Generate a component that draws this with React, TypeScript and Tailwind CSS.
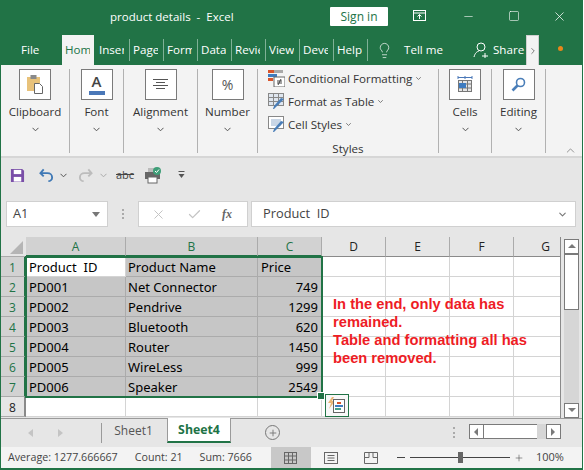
import React from "react";
import { ChevronDown, ChevronUp, ChevronRight, Lightbulb, Minus, Plus, Square, X, Check } from "lucide-react";

const ui = { fontFamily: '"Open Sans","Noto Sans",sans-serif' };

function Chev({ className = "" }: { className?: string }) {
  return (
    <svg width="7" height="5" viewBox="0 0 7 5" className={className}>
      <path d="M0.5 0.8 L3.5 3.8 L6.5 0.8" fill="none" stroke="#555" strokeWidth="1" />
    </svg>
  );
}

function Tab({ label, active }: { label: string; active?: boolean }) {
  return (
    <div className="relative w-[34px] h-[30px] shrink-0 flex items-center">
      <div className={active ? "absolute left-0 top-0 w-[32px] h-[30px] bg-[#f3f3f3]" : ""} />
      <span
        className={
          "relative block w-[25px] ml-[3px] overflow-hidden whitespace-nowrap text-[11.6px] " +
          (active ? "text-[#217346]" : "text-white")
        }
      >
        {label}
      </span>
      {!active && <div className="absolute right-0 top-[4px] h-[22px] w-px bg-[#7fb196]" />}
    </div>
  );
}

function Group({ w, label, icon }: { w: string; label: string; icon: React.ReactNode }) {
  return (
    <div className={"shrink-0 h-[84px] border-r border-[#b1b1b1] flex flex-col items-center pt-0 " + w}>
      <div className="w-[32px] h-[31px] bg-white border border-[#7a7a7a] flex items-center justify-center">{icon}</div>
      <div className="mt-[3px] text-[11.6px] leading-[18px] text-[#333]">{label}</div>
      <Chev className="mt-[6px]" />
    </div>
  );
}

function StyleRow({ label, icon, chev }: { label: string; icon: React.ReactNode; chev?: boolean }) {
  return (
    <div className="h-[23px] shrink-0 flex items-center">
      <div className="w-[17px] h-[17px] mr-[3px]">{icon}</div>
      <span className="text-[11.6px] text-[#333] whitespace-nowrap">{label}</span>
      {chev && <Chev className="ml-[3px] scale-75" />}
    </div>
  );
}

const cols = ["A", "B", "C", "D", "E", "F", "G"];
const rows: string[][] = [
  ["Product  ID", "Product Name", "Price"],
  ["PD001", "Net Connector", "749"],
  ["PD002", "Pendrive", "1299"],
  ["PD003", "Bluetooth", "620"],
  ["PD004", "Router", "1450"],
  ["PD005", "WireLess", "999"],
  ["PD006", "Speaker", "2549"],
  ["", "", ""],
];

function Cell({ text, sel, white, right, i }: { text?: string; sel?: boolean; white?: boolean; right?: boolean; i: number }) {
  const bg = sel && !white ? "bg-[#c6c6c6] border-[#ababab]" : "bg-white border-[#d4d4d4]";
  return (
    <div
      className={
        "border-r border-b h-[20px] leading-[21px] whitespace-pre text-[13px] text-black overflow-hidden " +
        (i === 1 ? "px-[2px] " : "px-[3px] ") +
        bg +
        (right ? " text-right" : "")
      }
      style={{ fontFamily: '"Noto Sans",sans-serif' }}
    >
      {text}
    </div>
  );
}

function SbBtn({ dir }: { dir: "up" | "down" | "left" | "right" }) {
  const pts = { up: "1,6 5,2 9,6", down: "1,2 5,6 9,2", left: "6,1 2,5 6,9", right: "2,1 6,5 2,9" }[dir];
  return (
    <div className="w-[15px] h-[15px] bg-white border border-[#7a7a7a] flex items-center justify-center shrink-0">
      <svg width="10" height="10" viewBox="0 0 10 10"><polygon points={pts} fill="#7a7a7a" /></svg>
    </div>
  );
}

export default function App() {
  return (
    <div className="w-[583px] h-[470px] bg-[#217346] flex flex-col overflow-hidden pl-px pr-px pb-[2px]" style={ui}>
      {/* Title bar */}
      <div className="h-[35px] shrink-0 flex items-center text-white relative">
        <div className="ml-[109px] w-[220px] text-[11.5px] whitespace-pre pb-[1px]">product details  -  Excel</div>
        <div className="w-[58px] h-[19px] bg-white rounded-[1px] text-[#217346] text-[12px] flex items-center justify-center mb-[2px]">Sign in</div>
        <svg width="14" height="12" viewBox="0 0 14 12" className="ml-[25px] mb-[3px]" fill="none" stroke="white">
          <rect x="0.5" y="0.5" width="12" height="10" />
          <path d="M0.5 3 H12.5 M6.5 9 V4.5 M4.5 6.5 L6.5 4.5 L8.5 6.5" />
        </svg>
        <Minus size={13} strokeWidth={1.1} className="ml-[35px] mb-[3px]" />
        <Square size={12} strokeWidth={1.2} className="ml-[33px] mb-[3px]" />
        <X size={15} strokeWidth={1.2} className="ml-[32px] mb-[3px]" />
      </div>
      {/* Tabs */}
      <div className="h-[30px] shrink-0 flex items-center text-white text-[11.6px]">
        <div className="w-[61px] pl-[20px]">File</div>
        <Tab label="Home" active />
        <Tab label="Insert" />
        <Tab label="Page" />
        <Tab label="Formulas" />
        <Tab label="Data" />
        <Tab label="Review" />
        <Tab label="View" />
        <Tab label="Developer" />
        <Tab label="Help" />
        <Lightbulb size={17} strokeWidth={1} className="ml-[8px] mr-[11px] shrink-0" />
        <span className="whitespace-nowrap">Tell me</span>
        <svg width="16" height="17" viewBox="0 0 16 17" className="ml-[30px] mr-[4px] shrink-0" fill="none" stroke="white">
          <circle cx="8" cy="5" r="4" />
          <path d="M1 15 C2 11 4 9.5 6 9 M9 14 H15 M12 11 V16" />
        </svg>
        <span>Share</span>
        <div className="ml-[2px] w-[13px] h-[30px] shrink-0 bg-[#f3f3f3] border border-b-0 border-[#d0d0d0] flex items-center justify-center">
          <ChevronRight size={10} color="#666" />
        </div>
        <div className="ml-[19px] w-[5px] h-[5px] shrink-0 rounded-full bg-[#e8861a] mb-[4px]" />
      </div>
      {/* Ribbon */}
      <div className="h-[93px] shrink-0 bg-[#f3f3f3] border-b-2 border-[#d6d6d6] flex pt-[4px] relative">
        <Group
          w="w-[69px]"
          label="Clipboard"
          icon={
            <svg width="16" height="19" viewBox="0 0 16 19">
              <rect x="0" y="2" width="13" height="14" fill="#e8c27a" />
              <rect x="3.5" y="0" width="6" height="4" fill="#8a8a8a" />
              <path d="M7.5 8.5 H12.5 L15.5 11.5 V18.5 H7.5 Z" fill="#fff" stroke="#666" />
            </svg>
          }
        />
        <Group
          w="w-[54px]"
          label="Font"
          icon={
            <div className="flex flex-col items-center w-[16px]">
              <span className="text-[15px] leading-[15px] font-semibold text-[#444]">A</span>
              <div className="w-[16px] h-[4px] bg-[#4a78b8] mt-[2px]" />
            </div>
          }
        />
        <Group
          w="w-[74px]"
          label="Alignment"
          icon={
            <svg width="15" height="11" viewBox="0 0 15 11" stroke="#555">
              <path d="M0 0.5 H15 M3 3.5 H12 M0 6.5 H15 M3 9.5 H12" />
            </svg>
          }
        />
        <Group w="w-[60px]" label="Number" icon={<span className="text-[14px] text-[#555]">%</span>} />
        <div className="w-[181px] shrink-0 h-[84px] border-r border-[#b1b1b1] flex flex-col pl-[10px] pt-0 relative">
          <div className="-mt-[2px] flex flex-col">
            <StyleRow
              chev
              label="Conditional Formatting"
              icon={
                <svg width="17" height="17" viewBox="0 0 17 17">
                  <rect x="0" y="0" width="6" height="3" fill="#d9542b" />
                  <rect x="6" y="0" width="9" height="3" fill="#a8a8a8" />
                  <rect x="0" y="4" width="9" height="3" fill="#3f7cc0" />
                  <rect x="0" y="8" width="5" height="3" fill="#d9542b" />
                  <rect x="6" y="7" width="11" height="10" fill="#fff" stroke="#666" />
                  <path d="M9 11 H14 M9 13 H14 M10 15 L13 9" stroke="#444" />
                </svg>
              }
            />
            <StyleRow
              chev
              label="Format as Table"
              icon={
                <svg width="17" height="17" viewBox="0 0 17 17">
                  <rect x="0.5" y="0.5" width="15" height="12" fill="#dfe6ef" stroke="#888" />
                  <path d="M0.5 4.5 H15 M0.5 8.5 H15 M5.5 0.5 V12 M10.5 0.5 V12" stroke="#888" />
                  <path d="M16 6 L9 13 L6 16 L5 16 L6 13 L13 5 Z" fill="#4a7eb8" />
                </svg>
              }
            />
            <StyleRow
              chev
              label="Cell Styles"
              icon={
                <svg width="17" height="17" viewBox="0 0 17 17">
                  <rect x="0.5" y="0.5" width="15" height="12" fill="#fff" stroke="#888" />
                  <rect x="3" y="3" width="10" height="7" fill="#c9d6e6" />
                  <path d="M16 6 L9 13 L6 16 L5 16 L6 13 L13 5 Z" fill="#4a7eb8" />
                </svg>
              }
            />
          </div>
          <div className="text-[11.6px] font-medium text-[#333] text-center leading-[16px] mt-[5px] -ml-[10px]">Styles</div>
        </div>
        <Group
          w="w-[53px]"
          label="Cells"
          icon={
            <svg width="16" height="17" viewBox="0 0 16 17" fill="none">
              <path d="M1 1.5 H15 M1 0 V3 M15 0 V3 M8 0 V3" stroke="#4a78b8" />
              <rect x="1.5" y="4.5" width="13" height="11" fill="#e6e6e6" stroke="#777" />
              <path d="M1.5 8 H14.5 M1.5 12 H14.5 M5.5 4.5 V15 M10.5 4.5 V15" stroke="#777" />
              <rect x="2" y="7" width="7" height="5" fill="#3f7cc0" />
            </svg>
          }
        />
        <Group
          w="w-[54px]"
          label="Editing"
          icon={
            <svg width="15" height="15" viewBox="0 0 15 15" fill="none" stroke="#4a7eb8">
              <circle cx="9.5" cy="5.5" r="4" strokeWidth="1.6" />
              <path d="M6.5 8.5 L1.5 13.5" strokeWidth="2.6" />
            </svg>
          }
        />
        <ChevronUp size={13} strokeWidth={1} color="#444" className="ml-[18px] mt-[75px]" />
      </div>
      {/* Quick access */}
      <div className="h-[37px] shrink-0 bg-[#e6e6e6] flex items-center pl-[9px] pb-[3px]">
        <svg width="15" height="15" viewBox="0 0 16 16" className="mr-[14px] shrink-0">
          <path d="M1 1 H13 L15 3 V15 H1 Z" fill="#7a4fa8" />
          <rect x="4" y="2" width="8" height="4.5" fill="#fff" />
          <rect x="4" y="9.5" width="8" height="5" fill="#fff" />
        </svg>
        <svg width="15" height="15" viewBox="0 0 16 15" fill="none" stroke="#3f78b5" strokeWidth="2">
          <path d="M5 1 L1.5 5 L5 8.5 M2 5 H9 C12 5 14 7 14 9.5 C14 12 12 13.5 10 13.5" />
        </svg>
        <Chev className="ml-[6px]" />
        <svg width="15" height="15" viewBox="0 0 16 15" fill="none" stroke="#bcbcbc" strokeWidth="2" className="ml-[11px]">
          <path d="M11 1 L14.5 5 L11 8.5 M14 5 H7 C4 5 2 7 2 9.5 C2 12 4 13.5 6 13.5" />
        </svg>
        <Chev className="ml-[7px] opacity-40" />
        <span className="ml-[9px] text-[11px] text-[#444] line-through">abc</span>
        <svg width="17" height="17" viewBox="0 0 17 17" className="ml-[11px]">
          <rect x="3" y="1" width="8" height="5" fill="#bbb" />
          <rect x="0" y="5" width="15" height="7" fill="#666" />
          <rect x="3" y="10" width="9" height="6" fill="#fff" stroke="#666" />
          <circle cx="12" cy="4" r="4" fill="#3f9e78" />
          <path d="M10 4 L11.5 5.5 L14 2.5" stroke="#fff" fill="none" />
        </svg>
        <svg width="7" height="8" viewBox="0 0 7 8" className="ml-[16px]" fill="#555">
          <rect x="0.5" y="0" width="6" height="1" />
          <polygon points="0.5,3 6.5,3 3.5,7" />
        </svg>
      </div>
      {/* Formula bar */}
      <div className="h-[42px] shrink-0 bg-[#e6e6e6] flex pl-[5px] pr-[6px] pt-[6px]">
        <div className="w-[102px] h-[26px] bg-white border border-[#d0d0d0] flex items-center pl-[6px] pr-[7px] justify-between text-[12.8px] text-[#444]">
          A1
          <svg width="8" height="5" viewBox="0 0 8 5"><polygon points="0,0 8,0 4,5" fill="#777" /></svg>
        </div>
        <div className="w-[30px] flex items-center justify-center h-[26px]">
          <div className="w-[2px] h-[10px] border-l-2 border-dotted border-[#aaa]" />
        </div>
        <div className="w-[110px] h-[26px] bg-white border border-[#d0d0d0] flex items-center pl-[12px] text-[#c4c4c4]">
          <X size={15} strokeWidth={1.6} />
          <Check size={15} strokeWidth={2} className="ml-[21px]" />
          <span className="ml-[20px] text-[12px] italic font-bold text-[#666]" style={{ fontFamily: '"Liberation Serif",serif' }}>fx</span>
        </div>
        <div className="ml-[3px] flex-1 h-[26px] bg-white border border-[#d0d0d0] flex items-center pl-[11px] pr-[7px] justify-between whitespace-pre text-[12.8px] text-[#444]">
          Product  ID
          <ChevronDown size={11} strokeWidth={2.4} color="#777" />
        </div>
      </div>
      {/* Sheet */}
      <div className="flex-1 min-h-0 bg-[#e6e6e6] flex">
        <div className="relative w-[560px] shrink-0 overflow-hidden border-r border-[#8a8a8a]">
          <div className="grid grid-cols-[25px_100px_132px_64px_64px_64px_64px_64px] grid-rows-[20px]">
            <div className="bg-[#e6e6e6] h-[20px] flex items-end justify-end pr-[3px] pb-[2px] border-b border-[#ababab]">
              <svg width="13" height="13" viewBox="0 0 13 13"><polygon points="13,0 13,13 0,13" fill="#b5b5b5" /></svg>
            </div>
            {cols.map((c, i) => (
              <div
                key={c}
                className={
                  "h-[20px] border-r text-center leading-[20px] text-[12px] " +
                  (i < 3 ? "bg-[#d2d2d2] text-[#217346] border-[#ababab] border-b-2 border-b-[#217346]" : "bg-[#e6e6e6] text-[#222] border-[#ababab] border-b border-b-[#8a8a8a]")
                }
              >
                {c}
              </div>
            ))}
            {rows.map((r, ri) => (
              <React.Fragment key={ri}>
                <div
                  className={
                    "h-[20px] border-r-2 border-b text-center leading-[21px] text-[12px] " +
                    (ri < 7 ? "bg-[#d2d2d2] text-[#217346] border-b-[#ababab] border-r-[#217346]" : "bg-[#e6e6e6] text-[#222] border-b-[#ababab] border-r-[#8a8a8a]")
                  }
                >
                  {ri + 1}
                </div>
                {r.map((t, ci) => (
                  <Cell key={ci} i={ci} text={t} sel={ri < 7} white={ri === 0 && ci === 0} right={ci === 2 && ri > 0} />
                ))}
                {[0, 1, 2, 3].map((k) => (
                  <Cell key={k} i={k} />
                ))}
              </React.Fragment>
            ))}
          </div>
          {/* selection outline */}
          <div className="absolute left-[24px] top-[19px] w-[298px] h-[142px] border-2 border-[#217346]" />
          <div className="absolute left-[316px] top-[155px] w-[6px] h-[6px] bg-[#217346] border border-white box-content" />
          {/* quick analysis */}
          <div className="absolute left-[324px] top-[157px] w-[24px] h-[23px] bg-[#f8f8f8] border border-[#217346] flex items-center justify-center">
            <svg width="18" height="17" viewBox="0 0 18 17">
              <path d="M4 0 L0 6 H3 L1 12 L7 4 H4 L6 0 Z" fill="#eab676" />
              <rect x="5.5" y="2.5" width="11" height="13" fill="#fff" stroke="#666" />
              <rect x="9" y="5" width="4" height="2" fill="#d9542b" />
              <rect x="7" y="8" width="8" height="2" fill="#3f7cc0" />
              <rect x="7" y="11" width="6" height="2" fill="#4aa088" />
            </svg>
          </div>
          {/* red note */}
          <div
            className="absolute left-[332px] top-[58px] text-[14.7px] leading-[18px] font-bold text-[#ee1c25] whitespace-nowrap"
            style={{ fontFamily: '"Liberation Sans",sans-serif' }}
          >
            In the end, only data has
            <br />
            remained.
            <br />
            Table and formatting all has
            <br />
            been removed.
          </div>
        </div>
        <div className="w-[19px] shrink-0 ml-[1px] flex flex-col items-center pt-[2px]">
          <SbBtn dir="up" />
          <div className="w-[15px] flex-1 bg-[#d6d6d6] flex flex-col">
            <div className="w-[15px] h-[56px] bg-white border border-[#7a7a7a]" />
          </div>
          <SbBtn dir="down" />
        </div>
      </div>
      {/* Sheet tabs */}
      <div className="h-[29px] shrink-0 bg-[#e6e6e6] flex items-start border-t border-[#9a9a9a] relative">
        <svg width="6" height="8" viewBox="0 0 6 8" className="ml-[27px] mt-[10px] shrink-0"><polygon points="5,0 5,8 0,4" fill="#c4c4c4" /></svg>
        <svg width="6" height="8" viewBox="0 0 6 8" className="ml-[24px] mt-[10px] shrink-0"><polygon points="0,0 0,8 5,4" fill="#c4c4c4" /></svg>
        <div className="ml-[37px] w-px h-[20px] mt-[4px] bg-[#9a9a9a] shrink-0" />
        <div className="w-[65px] h-[24px] shrink-0 text-center text-[12px] leading-[24px] text-[#555] pr-[2px]">Sheet1</div>
        <div className="w-[64px] h-[25px] shrink-0 -mt-px bg-white border-x border-[#9a9a9a] border-b-2 border-b-[#217346] text-center text-[12.3px] leading-[24px] font-bold text-[#217346]">Sheet4</div>
        <div className="ml-[34px] mt-[6px] w-[15px] h-[15px] rounded-full border-[1.5px] border-[#777] flex items-center justify-center shrink-0">
          <Plus size={10} strokeWidth={2.2} color="#777" />
        </div>
        <div className="ml-[173px] mt-[8px] w-[2px] h-[11px] border-l-2 border-dotted border-[#aaa] shrink-0" />
        <div className="ml-[14px] mt-[5px] flex items-center">
          <SbBtn dir="left" />
          <div className="w-[53px] h-[15px] bg-white border-y border-[#7a7a7a]" />
          <div className="w-[9px] h-[15px] bg-[#d6d6d6]" />
          <SbBtn dir="right" />
        </div>
      </div>
      {/* Status bar */}
      <div className="h-[21px] shrink-0 bg-[#f3f3f3] flex items-center text-[10.7px] text-[#444] whitespace-nowrap">
        <span className="ml-[7px]">Average: 1277.666667</span>
        <span className="ml-[17px]">Count: 21</span>
        <span className="ml-[17px]">Sum: 7666</span>
        <div className="ml-[19px] w-[40px] h-[21px] bg-[#c8c8c8] flex items-center justify-center shrink-0">
          <svg width="13" height="12" viewBox="0 0 13 12" fill="none" stroke="#666">
            <rect x="0.5" y="0.5" width="12" height="11" />
            <path d="M0.5 4 H12.5 M0.5 8 H12.5 M4.5 0.5 V11.5 M8.5 0.5 V11.5" />
          </svg>
        </div>
        <svg width="14" height="12" viewBox="0 0 14 12" fill="none" stroke="#666" className="ml-[13px] shrink-0">
          <rect x="0.5" y="0.5" width="13" height="11" />
          <path d="M3.5 3.5 H10.5 M3.5 6 H10.5 M3.5 8.5 H10.5" />
        </svg>
        <svg width="14" height="12" viewBox="0 0 14 12" fill="none" stroke="#666" className="ml-[26px] shrink-0">
          <path d="M0.5 0.5 H13.5 V11.5 H0.5 Z M5 0.5 V5.5 H0.5 M9 0.5 V5.5 H13.5" />
        </svg>
        <div className="ml-[19px] w-[8px] h-px bg-[#444] shrink-0" />
        <div className="ml-[5px] w-[100px] h-px bg-[#444] relative shrink-0">
          <div className="absolute left-[48px] -top-[5px] w-[5px] h-[11px] bg-[#666]" />
        </div>
        <Plus size={10} strokeWidth={1.2} color="#333" className="ml-[4px] shrink-0" />
        <span className="ml-[12px] text-[11px]">100%</span>
      </div>
    </div>
  );
}
